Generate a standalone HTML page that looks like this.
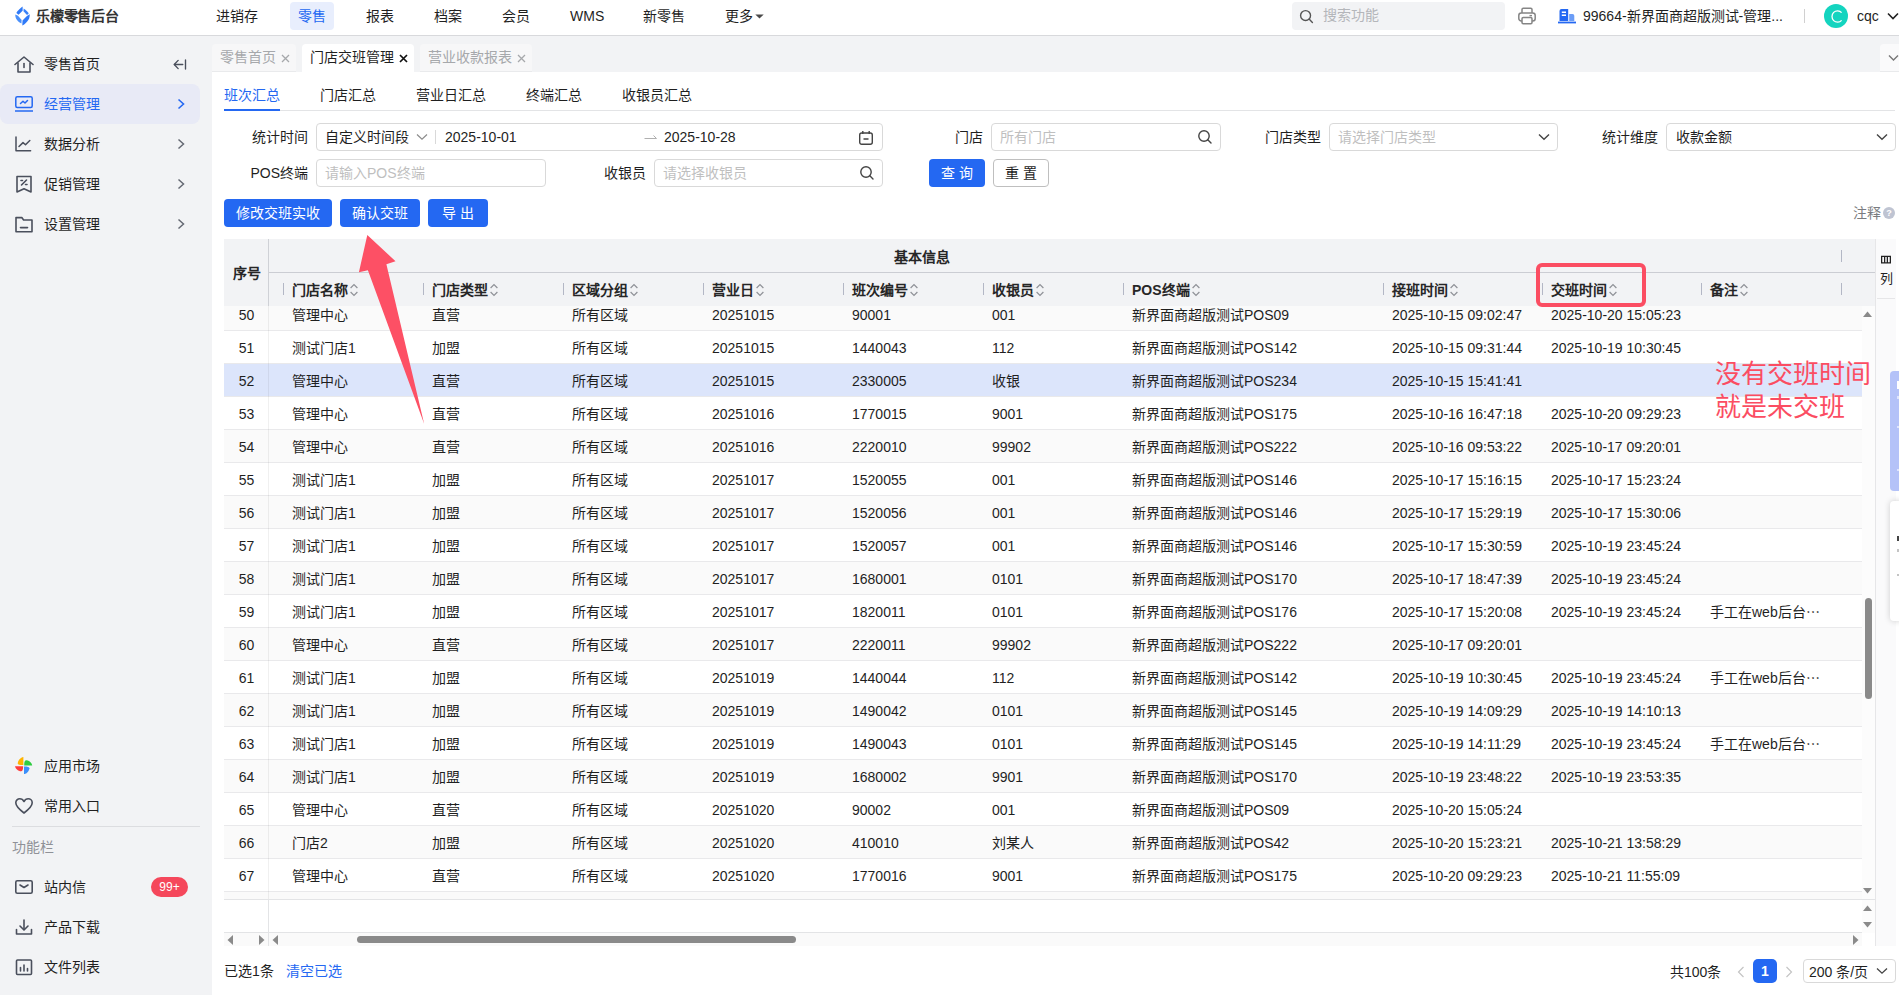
<!DOCTYPE html>
<html lang="zh-CN">
<head>
<meta charset="utf-8">
<title>门店交班管理</title>
<style>
*{box-sizing:border-box;margin:0;padding:0}
html,body{width:1899px;height:995px;overflow:hidden;background:#f2f3f5}
body{font-family:"Liberation Sans",sans-serif;font-size:14px;color:#1f1f1f;position:relative}
.abs{position:absolute}
svg{display:block}

/* ---------- top bar ---------- */
#topbar{position:absolute;left:0;top:0;width:1899px;height:36px;background:#fff;border-bottom:1px solid #d8d9dc}
#logo{position:absolute;left:14.8px;top:6px;width:15.4px;height:20px}
#brand{position:absolute;left:36px;top:0;height:32px;line-height:32px;font-size:14px;font-weight:bold;color:#333;letter-spacing:-0.2px}
.tnav{position:absolute;top:2px;height:28px;line-height:28px;font-size:14px;color:#1f1f1f;white-space:nowrap}
.tnav.on{background:#e8eefd;color:#2468f2;border-radius:4px;padding:0 8px}
#search{position:absolute;left:1292px;top:2px;width:213px;height:28px;background:#f2f3f5;border-radius:4px}
#search span{position:absolute;left:31px;top:0;line-height:27px;color:#b4b6ba;font-size:14px}
#org{position:absolute;left:1583px;top:0;line-height:32px;font-size:14px;white-space:nowrap}
#avatar{position:absolute;left:1824px;top:4px;width:24px;height:24px;border-radius:50%;background:#14d4bf;color:#fff;text-align:center;line-height:24px;font-size:17px}
#uname{position:absolute;left:1857px;top:0;line-height:32px;font-size:14px}

/* ---------- sidebar ---------- */
#side{position:absolute;left:0;top:36px;width:212px;height:959px;background:#f2f3f5}
.mi{position:absolute;left:0;width:200px;height:40px;line-height:40px;font-size:14px;color:#1f1f1f}
.mi .tx{position:absolute;left:44px;top:0;white-space:nowrap}
.mi svg.ic{position:absolute;left:14px;top:10px}
.mi svg.ar{position:absolute;left:177px;top:14px}
.mi.on{background:#e8eaf6;border-radius:8px;color:#2468f2}

/* ---------- tab bar ---------- */
.ptab{position:absolute;top:44px;height:28px;line-height:27px;font-size:14px;color:#a6a8ab;background:#f7f7f8;border-radius:4px 4px 0 0;white-space:nowrap;padding-left:7px}
.ptab.on{background:#fff;color:#1f1f1f}
.ptab svg{display:inline-block;margin-left:5px;vertical-align:-0.5px}
.ptab{border-bottom:1px solid #e9eaec}.ptab.on{border-bottom:0}

/* ---------- content ---------- */
#main{position:absolute;left:212px;top:72px;width:1687px;height:923px;background:#fff}
.stab{position:absolute;top:87px;line-height:16px;font-size:14px;color:#1f1f1f;white-space:nowrap}
.stab.on{color:#2468f2}
.lbl{position:absolute;height:28px;line-height:28px;font-size:14px;color:#1f1f1f;text-align:right;white-space:nowrap}
.inp{position:absolute;height:28px;border:1px solid #d9d9d9;border-radius:4px;background:#fff;line-height:26px;font-size:14px;white-space:nowrap}
.inp .ph{position:absolute;left:8px;top:0;color:#bfbfbf}
.inp .val{position:absolute;top:0;color:#1f1f1f}
.btn{position:absolute;height:28px;line-height:28px;border-radius:4px;background:#2468f2;color:#fff;font-size:14px;font-weight:500;text-align:center;white-space:nowrap}
.btn.w{background:#fff;color:#1f1f1f;border:1px solid #bfbfbf;line-height:26px}

/* ---------- table ---------- */
#thead{position:absolute;left:224px;top:239px;width:1651px;height:67px;background:#f2f3f5}
.th{position:absolute;top:281px;line-height:18px;font-size:14px;font-weight:bold;color:#262626;white-space:nowrap}
.sep{position:absolute;width:1px;height:12px;background:#b3b7c5}
#tbody{position:absolute;left:224px;top:306px;width:1638px;height:594px;overflow:hidden}
.row{position:absolute;left:0;width:1638px;height:33px;border-bottom:1px solid #e9e9eb;background:#fff;line-height:34px;font-size:14px;color:#1f1f1f;white-space:nowrap}
.row.alt{background:#fafafa}
.row.sel{background:#dce5fb}
.row span{position:absolute;top:0}
.th svg.sort{display:inline-block;vertical-align:-2px;margin-left:2px}
.c0{left:0;width:45px;text-align:center}
.c1{left:68px}.c2{left:208px}.c3{left:348px}.c4{left:488px}.c5{left:628px}.c6{left:768px}.c7{left:908px}.c8{left:1168px}.c9{left:1327px}.c10{left:1486px}
</style>
</head>
<body>

<!-- ================= TOP BAR ================= -->
<div id="topbar">
  <svg id="logo" viewBox="0 0 16 20"><path d="M7.9 0 C5.2 1.8 2.4 4.6 1.4 6.8 L3.7 8.8 L7.9 4.6 Z" fill="#2f7af8"/><path d="M9 2.2 C11.5 3.8 13.3 5.6 14.3 7.4 L12.5 9 L8.8 5.1 Z" fill="#3a83f9"/><path d="M0.3 8.4 C0.1 12.6 2.8 15.9 6.7 17.9 L6.9 14.2 L3.1 9.7 Z" fill="#4a90fb"/><path d="M15.3 8.3 C15.7 13 12.2 17.6 7.6 20 L7.8 14.7 L12.4 9.9 Z" fill="#2f7af8"/></svg>
  <div id="brand">乐檬零售后台</div>
  <div class="tnav" style="left:216px">进销存</div>
  <div class="tnav on" style="left:290px">零售</div>
  <div class="tnav" style="left:366px">报表</div>
  <div class="tnav" style="left:434px">档案</div>
  <div class="tnav" style="left:502px">会员</div>
  <div class="tnav" style="left:570px">WMS</div>
  <div class="tnav" style="left:643px">新零售</div>
  <div class="tnav" style="left:725px">更多</div>
  <svg class="abs" style="left:755px;top:13.5px" width="9" height="5" viewBox="0 0 9 5"><path d="M0.3 0.5 L8.7 0.5 L4.5 4.6 Z" fill="#4a4a4a"/></svg>
  <div id="search">
    <svg class="abs" style="left:7px;top:6.5px" width="15" height="15" viewBox="0 0 16 16"><circle cx="7" cy="7" r="5.3" fill="none" stroke="#555" stroke-width="1.5"/><path d="M11 11 L14.3 14.3" stroke="#555" stroke-width="1.5" stroke-linecap="round"/></svg>
    <span>搜索功能</span>
  </div>
  <svg class="abs" style="left:1517px;top:6px" width="20" height="20" viewBox="0 0 20 20"><g fill="none" stroke="#858585" stroke-width="1.5" stroke-linejoin="round"><path d="M5 7 V3.5 Q5 2.2 6.3 2.2 H13.7 Q15 2.2 15 3.5 V7"/><rect x="1.8" y="7" width="16.4" height="8" rx="2.5"/><rect x="5" y="11.5" width="10" height="6.3" rx="1.2" fill="#fff"/></g><path d="M12.5 9.6 H15" stroke="#858585" stroke-width="1.4"/></svg>
  <svg class="abs" style="left:1558px;top:8px" width="18" height="16" viewBox="0 0 18 16"><path d="M1.5 3 Q1.5 1 3.5 1 H10.2 V13 H1.5 Z" fill="#2468f2"/><path d="M11.2 6 H14.5 Q16.3 6 16.3 7.8 V13 H11.2 Z" fill="#6b9df7"/><path d="M0 13.6 H18 V15.4 H0 Z" fill="#2468f2"/><path d="M3.8 4.3 H8 M3.8 7.3 H8" stroke="#fff" stroke-width="1.4"/></svg>
  <div id="org">99664-新界面商超版测试-管理...</div>
  <div class="abs" style="left:1804px;top:9px;width:1px;height:14px;background:#d0d0d0"></div>
  <div id="avatar"><svg style="position:absolute;left:6.5px;top:5.5px" width="12" height="13" viewBox="0 0 12 13"><path d="M10.6 2.6 C9.6 1.4 8.3 0.8 6.7 0.8 C3.5 0.8 1 3.2 1 6.5 C1 9.8 3.5 12.2 6.7 12.2 C8.3 12.2 9.6 11.6 10.6 10.4" fill="none" stroke="#fff" stroke-width="1.3"/></svg></div>
  <div id="uname">cqc</div>
  <svg class="abs" style="left:1887px;top:12px" width="12" height="8" viewBox="0 0 12 8"><path d="M1 1.5 L6 6.5 L11 1.5" fill="none" stroke="#222" stroke-width="1.6"/></svg>
</div>

<!-- ================= SIDEBAR ================= -->
<div id="side">
  <div class="mi" style="top:8px">
    <svg class="ic" style="top:12px" width="20" height="17" viewBox="0 0 20 17"><g fill="none" stroke="#4a4f5c" stroke-width="1.6" stroke-linejoin="round" stroke-linecap="round"><path d="M1 8.5 L10 1 L19 8.5"/><path d="M4 7 V16 H16 V7"/><path d="M10 7.5 V11.5"/></g></svg>
    <span class="tx">零售首页</span>
    <svg class="abs" style="left:173px;top:15px" width="14" height="11" viewBox="0 0 15 12"><g fill="none" stroke="#4a4f5c" stroke-width="1.5" stroke-linecap="round" stroke-linejoin="round"><path d="M1.5 6 H10.5"/><path d="M5.5 1.5 L1.2 6 L5.5 10.5"/><path d="M13.5 1 V11"/></g></svg>
  </div>
  <div class="mi on" style="top:48px">
    <svg class="ic" style="left:15px;top:12px" width="18" height="16" viewBox="0 0 18 16"><g fill="none" stroke="#2468f2" stroke-width="1.5" stroke-linejoin="round" stroke-linecap="round"><rect x="0.8" y="0.8" width="16.4" height="10.8" rx="1.5"/><path d="M0 15 H18"/><path d="M5.5 7.5 L8 5.2 L10 7 L12.5 4.5"/></g></svg>
    <span class="tx">经营管理</span>
    <svg class="ar" width="8" height="12" viewBox="0 0 8 12"><path d="M1.5 1.5 L6.5 6 L1.5 10.5" fill="none" stroke="#2468f2" stroke-width="1.6"/></svg>
  </div>
  <div class="mi" style="top:88px">
    <svg class="ic" style="left:15px;top:12px" width="17" height="17" viewBox="0 0 17 17"><g fill="none" stroke="#4a4f5c" stroke-width="1.5" stroke-linejoin="round" stroke-linecap="round"><path d="M1 1 V14.8 H15.6"/><path d="M4 10.5 L8 6.6 L10.5 8.7 L14.8 4.5"/></g></svg>
    <span class="tx">数据分析</span>
    <svg class="ar" width="8" height="12" viewBox="0 0 8 12"><path d="M1.5 1.5 L6.5 6 L1.5 10.5" fill="none" stroke="#656973" stroke-width="1.5"/></svg>
  </div>
  <div class="mi" style="top:128px">
    <svg class="ic" width="20" height="20" viewBox="0 0 20 20"><g fill="none" stroke="#4a4f5c" stroke-width="1.6" stroke-linejoin="round" stroke-linecap="round"><path d="M3 2.5 H17 V18 L10 14.8 L3 18 Z"/><path d="M7.5 11 L12.5 6"/><path d="M7 6.5 H8.5 M11.5 10.5 H13"/></g></svg>
    <span class="tx">促销管理</span>
    <svg class="ar" width="8" height="12" viewBox="0 0 8 12"><path d="M1.5 1.5 L6.5 6 L1.5 10.5" fill="none" stroke="#656973" stroke-width="1.5"/></svg>
  </div>
  <div class="mi" style="top:168px">
    <svg class="ic" width="20" height="20" viewBox="0 0 20 20"><g fill="none" stroke="#4a4f5c" stroke-width="1.6" stroke-linejoin="round" stroke-linecap="round"><path d="M2 17.8 V3.6 H7.8 L9.6 6 H18 V17.8 Z"/><path d="M6.5 13.6 H13.5"/></g></svg>
    <span class="tx">设置管理</span>
    <svg class="ar" width="8" height="12" viewBox="0 0 8 12"><path d="M1.5 1.5 L6.5 6 L1.5 10.5" fill="none" stroke="#656973" stroke-width="1.5"/></svg>
  </div>

  <div class="mi" style="top:710px">
    <svg class="ic" style="left:15.4px;top:11px" width="17.3" height="17.3" viewBox="0 0 17.3 17.3"><path d="M8.4 0 C5.5 0.5 2.8 3.5 2.8 6.2 C2.8 7.6 4.5 8.1 8.4 8.1 Z" fill="#ffb400"/><path d="M17.2 8.4 C16.7 5.5 13.8 3.2 11.2 3.2 C9.8 3.2 9.2 4.8 9.2 8.4 Z" fill="#2ecc40"/><path d="M9 17.2 C11.8 16.7 14.4 13.8 14.4 11.2 C14.4 9.8 12.8 9.4 9 9.4 Z" fill="#3b8ffb"/><path d="M0 9.2 C0.5 12 3.5 14.2 6 14.2 C7.5 14.2 8.1 12.6 8.1 9.2 Z" fill="#ff3b3b"/></svg>
    <span class="tx">应用市场</span>
  </div>
  <div class="mi" style="top:750px">
    <svg class="ic" width="20" height="20" viewBox="0 0 20 20"><path d="M10 17 C4 12.5 1.8 9.8 1.8 6.8 C1.8 4.3 3.7 2.8 5.8 2.8 C7.6 2.8 9.2 4 10 5.5 C10.8 4 12.4 2.8 14.2 2.8 C16.3 2.8 18.2 4.3 18.2 6.8 C18.2 9.8 16 12.5 10 17Z" fill="none" stroke="#4a4f5c" stroke-width="1.6" stroke-linejoin="round"/></svg>
    <span class="tx">常用入口</span>
  </div>
  <div class="abs" style="left:12px;top:790px;width:188px;height:1px;background:#dcdde0"></div>
  <div class="abs" style="left:12px;top:801px;line-height:20px;font-size:14px;color:#8f9197">功能栏</div>
  <div class="mi" style="top:831px">
    <svg class="ic" width="20" height="20" viewBox="0 0 20 20"><g fill="none" stroke="#4a4f5c" stroke-width="1.6" stroke-linejoin="round" stroke-linecap="round"><rect x="1.8" y="3.8" width="16.4" height="12.4" rx="1.5"/><path d="M6 8 L10 10.5 L14 8"/></g></svg>
    <span class="tx">站内信</span>
    <div class="abs" style="left:151px;top:10px;width:37px;height:20px;border-radius:10px;background:#f5475b;color:#fff;font-size:12px;line-height:20px;text-align:center">99+</div>
  </div>
  <div class="mi" style="top:871px">
    <svg class="ic" width="20" height="20" viewBox="0 0 20 20"><g fill="none" stroke="#4a4f5c" stroke-width="1.6" stroke-linejoin="round" stroke-linecap="round"><path d="M10 3 V12.5"/><path d="M6 9 L10 13 L14 9"/><path d="M2.5 12.5 V17 H17.5 V12.5"/></g></svg>
    <span class="tx">产品下载</span>
  </div>
  <div class="mi" style="top:911px">
    <svg class="ic" width="20" height="20" viewBox="0 0 20 20"><g fill="none" stroke="#4a4f5c" stroke-width="1.6" stroke-linejoin="round" stroke-linecap="round"><rect x="2.5" y="3" width="15" height="14.5" rx="1"/><path d="M6.5 10.5 V14 M10 8 V14 M13.5 11.5 V14"/></g></svg>
    <span class="tx">文件列表</span>
  </div>
</div>


<!-- ================= PAGE TABS ================= -->
<div class="ptab" style="left:212px;width:84px;padding-left:8px">零售首页<svg width="9" height="9" viewBox="0 0 9 9"><path d="M1 1 L8 8 M8 1 L1 8" stroke="#a6a8ab" stroke-width="1.3"/></svg></div>
<div class="ptab on" style="left:302px;width:112px;padding-left:8px">门店交班管理<svg width="9" height="9" viewBox="0 0 9 9"><path d="M1 1 L8 8 M8 1 L1 8" stroke="#111" stroke-width="1.7"/></svg></div>
<div class="ptab" style="left:420px;width:112px;padding-left:8px">营业收款报表<svg width="9" height="9" viewBox="0 0 9 9"><path d="M1 1 L8 8 M8 1 L1 8" stroke="#a6a8ab" stroke-width="1.3"/></svg></div>
<div class="abs" style="left:1880px;top:44px;width:19px;height:28px;background:#fafafb;border-radius:4px 0 0 0;border-bottom:1px solid #e9eaec"></div>
<svg class="abs" style="left:1888px;top:54px" width="11" height="8" viewBox="0 0 11 8"><path d="M1 1.5 L5.5 6 L10 1.5" fill="none" stroke="#777" stroke-width="1.4"/></svg>


<!-- ================= MAIN CONTENT ================= -->
<div id="main"></div>

<!-- sub tabs -->
<div class="abs" style="left:224px;top:110px;width:1671px;height:1px;background:#e3e4e6"></div>
<div class="stab on" style="left:224px">班次汇总</div>
<div class="abs" style="left:224px;top:109px;width:56px;height:2px;background:#2468f2"></div>
<div class="stab" style="left:320px">门店汇总</div>
<div class="stab" style="left:416px">营业日汇总</div>
<div class="stab" style="left:526px">终端汇总</div>
<div class="stab" style="left:622px">收银员汇总</div>

<!-- filter row 1 -->
<div class="lbl" style="left:228px;top:123px;width:80px">统计时间</div>
<div class="inp" style="left:316px;top:123px;width:567px">
  <span class="val" style="left:8px">自定义时间段</span>
  <svg class="abs" style="left:99px;top:9px" width="12" height="8" viewBox="0 0 12 8"><path d="M1 1.5 L6 6.2 L11 1.5" fill="none" stroke="#8c8c8c" stroke-width="1.2"/></svg>
  <div class="abs" style="left:118px;top:6px;width:1px;height:14px;background:#d9d9d9"></div>
  <span class="val" style="left:128px">2025-10-01</span>
  <svg class="abs" style="left:327px;top:9px" width="14" height="8" viewBox="0 0 14 8"><path d="M0.5 5.5 H12.5 L9.5 2.5" fill="none" stroke="#b0b0b0" stroke-width="1"/></svg>
  <span class="val" style="left:347px">2025-10-28</span>
  <svg class="abs" style="left:541px;top:5.5px" width="16" height="16" viewBox="0 0 16 16"><g fill="none" stroke="#444" stroke-width="1.4" stroke-linejoin="round"><rect x="1.7" y="3" width="12.6" height="11.3" rx="2"/><path d="M4.8 1 V4 M11.2 1 V4 M5.5 9 H10.5"/></g></svg>
</div>
<div class="lbl" style="left:903px;top:123px;width:80px">门店</div>
<div class="inp" style="left:991px;top:123px;width:230px">
  <span class="ph">所有门店</span>
  <svg class="abs" style="left:205px;top:5px" width="16" height="16" viewBox="0 0 16 16"><circle cx="7" cy="7" r="5.2" fill="none" stroke="#444" stroke-width="1.4"/><path d="M10.8 10.8 L14 14" stroke="#444" stroke-width="1.4" stroke-linecap="round"/></svg>
</div>
<div class="lbl" style="left:1241px;top:123px;width:80px">门店类型</div>
<div class="inp" style="left:1329px;top:123px;width:229px">
  <span class="ph">请选择门店类型</span>
  <svg class="abs" style="left:208px;top:9px" width="12" height="8" viewBox="0 0 12 8"><path d="M1 1.5 L6 6.2 L11 1.5" fill="none" stroke="#444" stroke-width="1.4"/></svg>
</div>
<div class="lbl" style="left:1578px;top:123px;width:80px">统计维度</div>
<div class="inp" style="left:1666px;top:123px;width:230px">
  <span class="val" style="left:9px">收款金额</span>
  <svg class="abs" style="left:209px;top:9px" width="12" height="8" viewBox="0 0 12 8"><path d="M1 1.5 L6 6.2 L11 1.5" fill="none" stroke="#444" stroke-width="1.4"/></svg>
</div>

<!-- filter row 2 -->
<div class="lbl" style="left:228px;top:159px;width:80px">POS终端</div>
<div class="inp" style="left:316px;top:159px;width:230px"><span class="ph">请输入POS终端</span></div>
<div class="lbl" style="left:566px;top:159px;width:80px">收银员</div>
<div class="inp" style="left:654px;top:159px;width:229px">
  <span class="ph">请选择收银员</span>
  <svg class="abs" style="left:204px;top:5px" width="16" height="16" viewBox="0 0 16 16"><circle cx="7" cy="7" r="5.2" fill="none" stroke="#444" stroke-width="1.4"/><path d="M10.8 10.8 L14 14" stroke="#444" stroke-width="1.4" stroke-linecap="round"/></svg>
</div>
<div class="btn" style="left:929px;top:159px;width:56px">查 询</div>
<div class="btn w" style="left:993px;top:159px;width:56px">重 置</div>

<!-- action buttons -->
<div class="btn" style="left:224px;top:199px;width:108px">修改交班实收</div>
<div class="btn" style="left:340px;top:199px;width:80px">确认交班</div>
<div class="btn" style="left:428px;top:199px;width:60px">导 出</div>
<div class="abs" style="left:1853px;top:203px;line-height:20px;font-size:14px;color:#7a7c80">注释</div>
<div class="abs" style="left:1883px;top:207px;width:12px;height:12px;border-radius:50%;background:#bfc4d2;color:#fff;font-size:9px;line-height:12px;text-align:center;font-weight:bold">?</div>

<!-- table header -->
<div id="thead"></div>
<div class="abs" style="left:269px;top:272px;width:1606px;height:1px;background:#cbcdd3"></div>
<div class="abs" style="left:268px;top:239px;width:1px;height:67px;background:#cfd1d6"></div>
<div class="th" style="left:233px;top:264px">序号</div>
<div class="th" style="left:894px;top:248px">基本信息</div>
<div class="sep" style="left:283px;top:283px"></div><div class="th" style="left:292px">门店名称<svg class="sort" width="8" height="14" viewBox="0 0 8 14"><path d="M0.6 5 L4 1.5 L7.4 5 M0.6 9 L4 12.5 L7.4 9" fill="none" stroke="#8f9197" stroke-width="1.2"/></svg></div>
<div class="sep" style="left:423px;top:283px"></div><div class="th" style="left:432px">门店类型<svg class="sort" width="8" height="14" viewBox="0 0 8 14"><path d="M0.6 5 L4 1.5 L7.4 5 M0.6 9 L4 12.5 L7.4 9" fill="none" stroke="#8f9197" stroke-width="1.2"/></svg></div>
<div class="sep" style="left:563px;top:283px"></div><div class="th" style="left:572px">区域分组<svg class="sort" width="8" height="14" viewBox="0 0 8 14"><path d="M0.6 5 L4 1.5 L7.4 5 M0.6 9 L4 12.5 L7.4 9" fill="none" stroke="#8f9197" stroke-width="1.2"/></svg></div>
<div class="sep" style="left:703px;top:283px"></div><div class="th" style="left:712px">营业日<svg class="sort" width="8" height="14" viewBox="0 0 8 14"><path d="M0.6 5 L4 1.5 L7.4 5 M0.6 9 L4 12.5 L7.4 9" fill="none" stroke="#8f9197" stroke-width="1.2"/></svg></div>
<div class="sep" style="left:843px;top:283px"></div><div class="th" style="left:852px">班次编号<svg class="sort" width="8" height="14" viewBox="0 0 8 14"><path d="M0.6 5 L4 1.5 L7.4 5 M0.6 9 L4 12.5 L7.4 9" fill="none" stroke="#8f9197" stroke-width="1.2"/></svg></div>
<div class="sep" style="left:983px;top:283px"></div><div class="th" style="left:992px">收银员<svg class="sort" width="8" height="14" viewBox="0 0 8 14"><path d="M0.6 5 L4 1.5 L7.4 5 M0.6 9 L4 12.5 L7.4 9" fill="none" stroke="#8f9197" stroke-width="1.2"/></svg></div>
<div class="sep" style="left:1123px;top:283px"></div><div class="th" style="left:1132px">POS终端<svg class="sort" width="8" height="14" viewBox="0 0 8 14"><path d="M0.6 5 L4 1.5 L7.4 5 M0.6 9 L4 12.5 L7.4 9" fill="none" stroke="#8f9197" stroke-width="1.2"/></svg></div>
<div class="sep" style="left:1383px;top:283px"></div><div class="th" style="left:1392px">接班时间<svg class="sort" width="8" height="14" viewBox="0 0 8 14"><path d="M0.6 5 L4 1.5 L7.4 5 M0.6 9 L4 12.5 L7.4 9" fill="none" stroke="#8f9197" stroke-width="1.2"/></svg></div>
<div class="sep" style="left:1542px;top:283px"></div><div class="th" style="left:1551px">交班时间<svg class="sort" width="8" height="14" viewBox="0 0 8 14"><path d="M0.6 5 L4 1.5 L7.4 5 M0.6 9 L4 12.5 L7.4 9" fill="none" stroke="#8f9197" stroke-width="1.2"/></svg></div>
<div class="sep" style="left:1701px;top:283px"></div><div class="th" style="left:1710px">备注<svg class="sort" width="8" height="14" viewBox="0 0 8 14"><path d="M0.6 5 L4 1.5 L7.4 5 M0.6 9 L4 12.5 L7.4 9" fill="none" stroke="#8f9197" stroke-width="1.2"/></svg></div>
<div class="sep" style="left:1841px;top:283px"></div>
<div class="sep" style="left:1841px;top:250px"></div>

<!-- column tool side bar -->
<div class="abs" style="left:1875px;top:239px;width:21px;height:707px;background:#fafafb;border-left:1px solid #e6e6e8"></div>
<div class="abs" style="left:1877px;top:298px;width:18px;height:1px;background:#e6e6e8"></div>
<svg class="abs" style="left:1881px;top:255px" width="10" height="9" viewBox="0 0 11 9"><path d="M0.7 1 H10.3 V8.3 H0.7 Z M4 1 V8.3 M7 1 V8.3" fill="none" stroke="#222" stroke-width="1.4"/></svg>
<div class="abs" style="left:1880px;top:269px;font-size:13px;line-height:20px;color:#222">列</div>

<!-- table body -->
<div id="tbody">
  <div class="row alt" style="top:-8px"><span class="c0">50</span><span class="c1">管理中心</span><span class="c2">直营</span><span class="c3">所有区域</span><span class="c4">20251015</span><span class="c5">90001</span><span class="c6">001</span><span class="c7">新界面商超版测试POS09</span><span class="c8">2025-10-15 09:02:47</span><span class="c9">2025-10-20 15:05:23</span></div>
  <div class="row" style="top:25px"><span class="c0">51</span><span class="c1">测试门店1</span><span class="c2">加盟</span><span class="c3">所有区域</span><span class="c4">20251015</span><span class="c5">1440043</span><span class="c6">112</span><span class="c7">新界面商超版测试POS142</span><span class="c8">2025-10-15 09:31:44</span><span class="c9">2025-10-19 10:30:45</span></div>
  <div class="row sel" style="top:58px"><span class="c0">52</span><span class="c1">管理中心</span><span class="c2">直营</span><span class="c3">所有区域</span><span class="c4">20251015</span><span class="c5">2330005</span><span class="c6">收银</span><span class="c7">新界面商超版测试POS234</span><span class="c8">2025-10-15 15:41:41</span></div>
  <div class="row" style="top:91px"><span class="c0">53</span><span class="c1">管理中心</span><span class="c2">直营</span><span class="c3">所有区域</span><span class="c4">20251016</span><span class="c5">1770015</span><span class="c6">9001</span><span class="c7">新界面商超版测试POS175</span><span class="c8">2025-10-16 16:47:18</span><span class="c9">2025-10-20 09:29:23</span></div>
  <div class="row alt" style="top:124px"><span class="c0">54</span><span class="c1">管理中心</span><span class="c2">直营</span><span class="c3">所有区域</span><span class="c4">20251016</span><span class="c5">2220010</span><span class="c6">99902</span><span class="c7">新界面商超版测试POS222</span><span class="c8">2025-10-16 09:53:22</span><span class="c9">2025-10-17 09:20:01</span></div>
  <div class="row" style="top:157px"><span class="c0">55</span><span class="c1">测试门店1</span><span class="c2">加盟</span><span class="c3">所有区域</span><span class="c4">20251017</span><span class="c5">1520055</span><span class="c6">001</span><span class="c7">新界面商超版测试POS146</span><span class="c8">2025-10-17 15:16:15</span><span class="c9">2025-10-17 15:23:24</span></div>
  <div class="row alt" style="top:190px"><span class="c0">56</span><span class="c1">测试门店1</span><span class="c2">加盟</span><span class="c3">所有区域</span><span class="c4">20251017</span><span class="c5">1520056</span><span class="c6">001</span><span class="c7">新界面商超版测试POS146</span><span class="c8">2025-10-17 15:29:19</span><span class="c9">2025-10-17 15:30:06</span></div>
  <div class="row" style="top:223px"><span class="c0">57</span><span class="c1">测试门店1</span><span class="c2">加盟</span><span class="c3">所有区域</span><span class="c4">20251017</span><span class="c5">1520057</span><span class="c6">001</span><span class="c7">新界面商超版测试POS146</span><span class="c8">2025-10-17 15:30:59</span><span class="c9">2025-10-19 23:45:24</span></div>
  <div class="row alt" style="top:256px"><span class="c0">58</span><span class="c1">测试门店1</span><span class="c2">加盟</span><span class="c3">所有区域</span><span class="c4">20251017</span><span class="c5">1680001</span><span class="c6">0101</span><span class="c7">新界面商超版测试POS170</span><span class="c8">2025-10-17 18:47:39</span><span class="c9">2025-10-19 23:45:24</span></div>
  <div class="row" style="top:289px"><span class="c0">59</span><span class="c1">测试门店1</span><span class="c2">加盟</span><span class="c3">所有区域</span><span class="c4">20251017</span><span class="c5">1820011</span><span class="c6">0101</span><span class="c7">新界面商超版测试POS176</span><span class="c8">2025-10-17 15:20:08</span><span class="c9">2025-10-19 23:45:24</span><span class="c10">手工在web后台⋯</span></div>
  <div class="row alt" style="top:322px"><span class="c0">60</span><span class="c1">管理中心</span><span class="c2">直营</span><span class="c3">所有区域</span><span class="c4">20251017</span><span class="c5">2220011</span><span class="c6">99902</span><span class="c7">新界面商超版测试POS222</span><span class="c8">2025-10-17 09:20:01</span></div>
  <div class="row" style="top:355px"><span class="c0">61</span><span class="c1">测试门店1</span><span class="c2">加盟</span><span class="c3">所有区域</span><span class="c4">20251019</span><span class="c5">1440044</span><span class="c6">112</span><span class="c7">新界面商超版测试POS142</span><span class="c8">2025-10-19 10:30:45</span><span class="c9">2025-10-19 23:45:24</span><span class="c10">手工在web后台⋯</span></div>
  <div class="row alt" style="top:388px"><span class="c0">62</span><span class="c1">测试门店1</span><span class="c2">加盟</span><span class="c3">所有区域</span><span class="c4">20251019</span><span class="c5">1490042</span><span class="c6">0101</span><span class="c7">新界面商超版测试POS145</span><span class="c8">2025-10-19 14:09:29</span><span class="c9">2025-10-19 14:10:13</span></div>
  <div class="row" style="top:421px"><span class="c0">63</span><span class="c1">测试门店1</span><span class="c2">加盟</span><span class="c3">所有区域</span><span class="c4">20251019</span><span class="c5">1490043</span><span class="c6">0101</span><span class="c7">新界面商超版测试POS145</span><span class="c8">2025-10-19 14:11:29</span><span class="c9">2025-10-19 23:45:24</span><span class="c10">手工在web后台⋯</span></div>
  <div class="row alt" style="top:454px"><span class="c0">64</span><span class="c1">测试门店1</span><span class="c2">加盟</span><span class="c3">所有区域</span><span class="c4">20251019</span><span class="c5">1680002</span><span class="c6">9901</span><span class="c7">新界面商超版测试POS170</span><span class="c8">2025-10-19 23:48:22</span><span class="c9">2025-10-19 23:53:35</span></div>
  <div class="row" style="top:487px"><span class="c0">65</span><span class="c1">管理中心</span><span class="c2">直营</span><span class="c3">所有区域</span><span class="c4">20251020</span><span class="c5">90002</span><span class="c6">001</span><span class="c7">新界面商超版测试POS09</span><span class="c8">2025-10-20 15:05:24</span></div>
  <div class="row alt" style="top:520px"><span class="c0">66</span><span class="c1">门店2</span><span class="c2">加盟</span><span class="c3">所有区域</span><span class="c4">20251020</span><span class="c5">410010</span><span class="c6">刘某人</span><span class="c7">新界面商超版测试POS42</span><span class="c8">2025-10-20 15:23:21</span><span class="c9">2025-10-21 13:58:29</span></div>
  <div class="row" style="top:553px"><span class="c0">67</span><span class="c1">管理中心</span><span class="c2">直营</span><span class="c3">所有区域</span><span class="c4">20251020</span><span class="c5">1770016</span><span class="c6">9001</span><span class="c7">新界面商超版测试POS175</span><span class="c8">2025-10-20 09:29:23</span><span class="c9">2025-10-21 11:55:09</span></div>
  <div class="row alt" style="top:586px"></div>
</div>

<div class="abs" style="left:268px;top:306px;width:1px;height:594px;background:rgba(0,0,0,.06)"></div>
<!-- vertical scrollbar -->
<div class="abs" style="left:1862px;top:306px;width:13px;height:627px;background:#fcfcfc"></div>
<svg class="abs" style="left:1863px;top:311px" width="9" height="6" viewBox="0 0 9 6"><path d="M0 6 L4.5 0.5 L9 6 Z" fill="#8a8a8a"/></svg>
<div class="abs" style="left:1865px;top:598px;width:7px;height:101px;border-radius:4px;background:#8a8a8a"></div>
<svg class="abs" style="left:1863px;top:888px" width="9" height="6" viewBox="0 0 9 6"><path d="M0 0 L4.5 5.5 L9 0 Z" fill="#8a8a8a"/></svg>

<!-- pinned bottom (empty) + horizontal scrollbar -->
<div class="abs" style="left:224px;top:899px;width:1651px;height:1px;background:#e3e4e6;z-index:2"></div>
<div class="abs" style="left:224px;top:900px;width:1638px;height:32px;background:#fff"></div>
<div class="abs" style="left:268px;top:900px;width:1px;height:46px;background:#e3e4e6;z-index:2"></div>
<svg class="abs" style="left:1863px;top:905px" width="9" height="6" viewBox="0 0 9 6"><path d="M0 6 L4.5 0.5 L9 6 Z" fill="#8a8a8a"/></svg>
<svg class="abs" style="left:1863px;top:922px" width="9" height="6" viewBox="0 0 9 6"><path d="M0 0 L4.5 5.5 L9 0 Z" fill="#8a8a8a"/></svg>
<div class="abs" style="left:224px;top:932px;width:1638px;height:14px;background:#fafafa;border-top:1px solid #e3e4e6"></div>
<svg class="abs" style="left:227px;top:934.5px" width="6" height="10" viewBox="0 0 6 10"><path d="M6 0 L0.5 5 L6 10 Z" fill="#8a8a8a"/></svg>
<svg class="abs" style="left:259px;top:934.5px" width="6" height="10" viewBox="0 0 6 10"><path d="M0 0 L5.5 5 L0 10 Z" fill="#8a8a8a"/></svg>
<svg class="abs" style="left:272px;top:934.5px" width="6" height="10" viewBox="0 0 6 10"><path d="M6 0 L0.5 5 L6 10 Z" fill="#8a8a8a"/></svg>
<svg class="abs" style="left:1853px;top:934.5px" width="6" height="10" viewBox="0 0 6 10"><path d="M0 0 L5.5 5 L0 10 Z" fill="#8a8a8a"/></svg>
<div class="abs" style="left:357px;top:936px;width:439px;height:7px;border-radius:4px;background:#8a8a8a"></div>

<!-- footer -->
<div class="abs" style="left:224px;top:961px;line-height:20px;font-size:14px;color:#1f1f1f">已选1条</div>
<div class="abs" style="left:286px;top:961px;line-height:20px;font-size:14px;color:#2468f2">清空已选</div>
<div class="abs" style="left:1670px;top:962px;line-height:20px;font-size:14px;color:#1f1f1f">共100条</div>
<svg class="abs" style="left:1737px;top:966px" width="8" height="12" viewBox="0 0 8 12"><path d="M6.5 1 L1.5 6 L6.5 11" fill="none" stroke="#c4c4c4" stroke-width="1.2"/></svg>
<div class="abs" style="left:1753px;top:959px;width:24px;height:24px;border-radius:5px;background:#2468f2;color:#fff;font-size:14px;font-weight:bold;line-height:24px;text-align:center">1</div>
<svg class="abs" style="left:1785px;top:966px" width="8" height="12" viewBox="0 0 8 12"><path d="M1.5 1 L6.5 6 L1.5 11" fill="none" stroke="#c4c4c4" stroke-width="1.2"/></svg>
<div class="inp" style="left:1803px;top:959px;width:93px;height:24px;line-height:24px">
  <span class="val" style="left:5px">200 条/页</span>
  <svg class="abs" style="left:72px;top:7px" width="12" height="8" viewBox="0 0 12 8"><path d="M1 1.5 L6 6.2 L11 1.5" fill="none" stroke="#444" stroke-width="1.3"/></svg>
</div>

<!-- ================= ANNOTATIONS ================= -->
<div class="abs" style="left:1536px;top:262.7px;width:110.2px;height:44.4px;border:4px solid #fb4d62;border-radius:6px"></div>
<svg class="abs" style="left:340px;top:230px" width="110" height="200" viewBox="0 0 110 200"><path d="M27.3 5 L55.5 31.2 L46.4 34.2 L84.2 194 L27.9 40.2 L18.9 42.2 Z" fill="#fd5065"/></svg>
<div class="abs" style="left:1715px;top:357.5px;font-size:26px;line-height:33.4px;color:#fb4d62;white-space:nowrap">没有交班时间<br>就是未交班</div>

<!-- floating side widgets -->
<div class="abs" style="left:1897px;top:536px;width:2px;height:5px;background:#444;z-index:3"></div>
<div class="abs" style="left:1897px;top:549px;width:2px;height:3px;background:#c4c4c4;z-index:3"></div>
<div class="abs" style="left:1897px;top:574px;width:2px;height:2px;background:#c4c4c4;z-index:3"></div>
<div class="abs" style="left:1890px;top:371px;width:14px;height:120px;border-radius:4px;background:#b4c2f8"></div>
<div class="abs" style="left:1897px;top:381px;width:2px;height:8px;background:#fff"></div>
<div class="abs" style="left:1897px;top:396px;width:2px;height:3px;background:#dfe5fc"></div>
<div class="abs" style="left:1897px;top:426px;width:2px;height:2px;background:#dfe5fc"></div>
<div class="abs" style="left:1897px;top:469px;width:2px;height:2px;background:#dfe5fc"></div>
<div class="abs" style="left:1890px;top:501px;width:14px;height:120px;border-radius:4px;background:#fff;box-shadow:0 0 6px rgba(0,0,0,.18)"></div>


</body>
</html>
